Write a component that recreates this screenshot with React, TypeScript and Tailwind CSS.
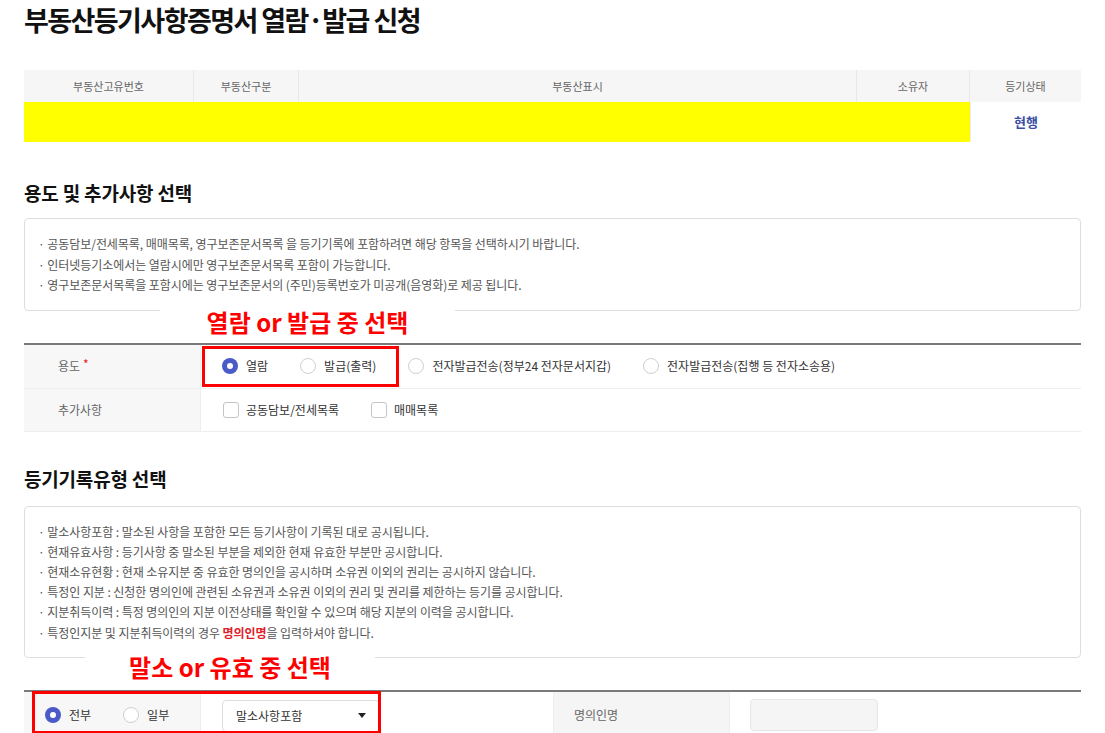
import React from 'react';

const font = { fontFamily: '"Noto Sans CJK KR", "Noto Sans", sans-serif' };

function Radio({ checked, label }: { checked?: boolean; label: string }) {
  return (
    <label className="flex items-center gap-[8px] text-[12px] text-[#333] tracking-[0em]">
      {checked ? (
        <span className="w-[16px] h-[16px] rounded-full bg-[#4a5bc7] flex items-center justify-center">
          <span className="w-[6px] h-[6px] rounded-full bg-white" />
        </span>
      ) : (
        <span className="w-[16px] h-[16px] rounded-full border border-[#cfcfcf] bg-white" />
      )}
      {label}
    </label>
  );
}

function Checkbox({ label }: { label: string }) {
  return (
    <label className="flex items-center gap-[7px] text-[12px] text-[#333]">
      <span className="w-[16px] h-[16px] rounded-[3px] border border-[#c4c4c4] bg-white" />
      {label}
    </label>
  );
}

const notice1 = [
  '공동담보/전세목록, 매매목록, 영구보존문서목록 을 등기기록에 포함하려면 해당 항목을 선택하시기 바랍니다.',
  '인터넷등기소에서는 열람시에만 영구보존문서목록 포함이 가능합니다.',
  '영구보존문서목록을 포함시에는 영구보존문서의 (주민)등록번호가 미공개(음영화)로 제공 됩니다.',
];

const notice2 = [
  '말소사항포함 : 말소된 사항을 포함한 모든 등기사항이 기록된 대로 공시됩니다.',
  '현재유효사항 : 등기사항 중 말소된 부분을 제외한 현재 유효한 부분만 공시합니다.',
  '현재소유현황 : 현재 소유지분 중 유효한 명의인을 공시하며 소유권 이외의 권리는 공시하지 않습니다.',
  '특정인 지분 : 신청한 명의인에 관련된 소유권과 소유권 이외의 권리 및 권리를 제한하는 등기를 공시합니다.',
  '지분취득이력 : 특정 명의인의 지분 이전상태를 확인할 수 있으며 해당 지분의 이력을 공시합니다.',
];

export default function App() {
  return (
    <div className="relative w-[1105px] bg-white px-[24px] pb-[40px]" style={font}>
      {/* 제목 */}
      <h1 className="pt-[4px] text-[27px] leading-[32px] font-bold text-[#111] tracking-[-0.058em]">
        부동산등기사항증명서 열람·발급 신청
      </h1>

      {/* 부동산 목록 */}
      <div className="mt-[34px] text-[11px] text-[#666]">
        <div className="flex h-[32px] bg-[#f6f6f6]">
          <div className="w-[170px] flex items-center justify-center border-r border-[#e8e8e8]">부동산고유번호</div>
          <div className="w-[105px] flex items-center justify-center border-r border-[#e8e8e8]">부동산구분</div>
          <div className="flex-1 flex items-center justify-center border-r border-[#e8e8e8]">부동산표시</div>
          <div className="w-[113px] flex items-center justify-center border-r border-[#e8e8e8]">소유자</div>
          <div className="w-[111px] flex items-center justify-center">등기상태</div>
        </div>
        <div className="flex h-[40px]">
          <div className="flex-1 bg-[#ffff00]" />
          <div className="w-[111px] flex items-center justify-center text-[13px] font-bold text-[#3b4ea6] border-l border-[#eee]">
            현행
          </div>
        </div>
      </div>

      {/* 용도 및 추가사항 */}
      <h2 className="mt-[38px] text-[19px] leading-[26px] font-bold text-[#111] tracking-[-0.01em]">
        용도 및 추가사항 선택
      </h2>
      <div className="mt-[12px] border border-[#dedede] rounded-[4px] pl-[13px] pt-[15px] pb-[14px] text-[12px] leading-[20.5px] text-[#555] tracking-[-0.005em]">
        {notice1.map(t => (
          <div key={t}>· {t}</div>
        ))}
      </div>

      <div className="mt-[32px] border-t-2 border-[#7a7a7a] text-[12px]">
        <div className="flex h-[44px] border-b border-[#eeeeee]">
          <div className="w-[177px] bg-[#f7f7f7] flex items-center pl-[34px] text-[#666] border-r border-[#eeeeee]">
            용도 <span className="text-[#e02020] ml-[3px] -mt-[4px]">*</span>
          </div>
          <div className="flex-1 flex items-center gap-[32px] pl-[21px]">
            <Radio checked label="열람" />
            <Radio label="발급(출력)" />
            <Radio label="전자발급전송(정부24 전자문서지갑)" />
            <Radio label="전자발급전송(집행 등 전자소송용)" />
          </div>
        </div>
        <div className="flex h-[43px] border-b border-[#eeeeee]">
          <div className="w-[177px] bg-[#f7f7f7] flex items-center pl-[34px] text-[#666] border-r border-[#eeeeee]">
            추가사항
          </div>
          <div className="flex-1 flex items-center gap-[32px] pl-[22px]">
            <Checkbox label="공동담보/전세목록" />
            <Checkbox label="매매목록" />
          </div>
        </div>
      </div>

      {/* 등기기록유형 */}
      <h2 className="mt-[34px] text-[19px] leading-[26px] font-bold text-[#111] tracking-[-0.01em]">
        등기기록유형 선택
      </h2>
      <div className="mt-[14px] border border-[#dedede] rounded-[4px] pl-[13px] pt-[15px] pb-[14px] text-[12px] leading-[20.2px] text-[#555] tracking-[-0.005em]">
        {notice2.map(t => (
          <div key={t}>· {t}</div>
        ))}
        <div>
          · 특정인지분 및 지분취득이력의 경우 <span className="text-[#e0202a] font-bold">명의인명</span>을 입력하셔야 합니다.
        </div>
      </div>

      <div className="mt-[32px] border-t-2 border-[#7a7a7a] text-[12px]">
        <div className="flex h-[48px] border-b border-[#eeeeee]">
          <div className="w-[177px] bg-[#f7f7f7] flex items-center gap-[32px] pl-[21px] border-r border-[#eeeeee]">
            <Radio checked label="전부" />
            <Radio label="일부" />
          </div>
          <div className="w-[352px] flex items-start pt-[8px] pl-[21px]">
            <div className="w-[158px] h-[32px] border border-[#dddddd] rounded-[4px] flex items-center justify-between pl-[13px] pr-[13px] text-[#333]">
              말소사항포함
              <svg width="8" height="5" viewBox="0 0 8 5">
                <path d="M0 0h8L4 5z" fill="#222" />
              </svg>
            </div>
          </div>
          <div className="w-[177px] bg-[#f5f5f5] flex items-center pl-[20px] text-[#666] border-x border-[#eeeeee]">
            명의인명
          </div>
          <div className="flex-1 flex items-start pt-[7px] pl-[20px]">
            <div className="w-[128px] h-[32px] bg-[#f5f5f5] border border-[#e6e6e6] rounded-[4px]" />
          </div>
        </div>
      </div>

      {/* 주석 표시 */}
      <div className="absolute left-[160px] top-[304px] w-[295px] h-[36px] bg-white flex items-center justify-center text-[24px] font-bold text-[#ff0000] tracking-[0em]">
        열람 or 발급 중 선택
      </div>
      <div className="absolute left-[202px] top-[346px] w-[197px] h-[41px] border-[3px] border-[#ff0000]" />
      <div className="absolute left-[85px] top-[650px] w-[290px] h-[34px] bg-white flex items-center justify-center text-[24px] font-bold text-[#ff0000] tracking-[0em]">
        말소 or 유효 중 선택
      </div>
      <div className="absolute left-[32px] top-[691px] w-[349px] h-[43px] border-[3px] border-[#ff0000]" />
    </div>
  );
}
